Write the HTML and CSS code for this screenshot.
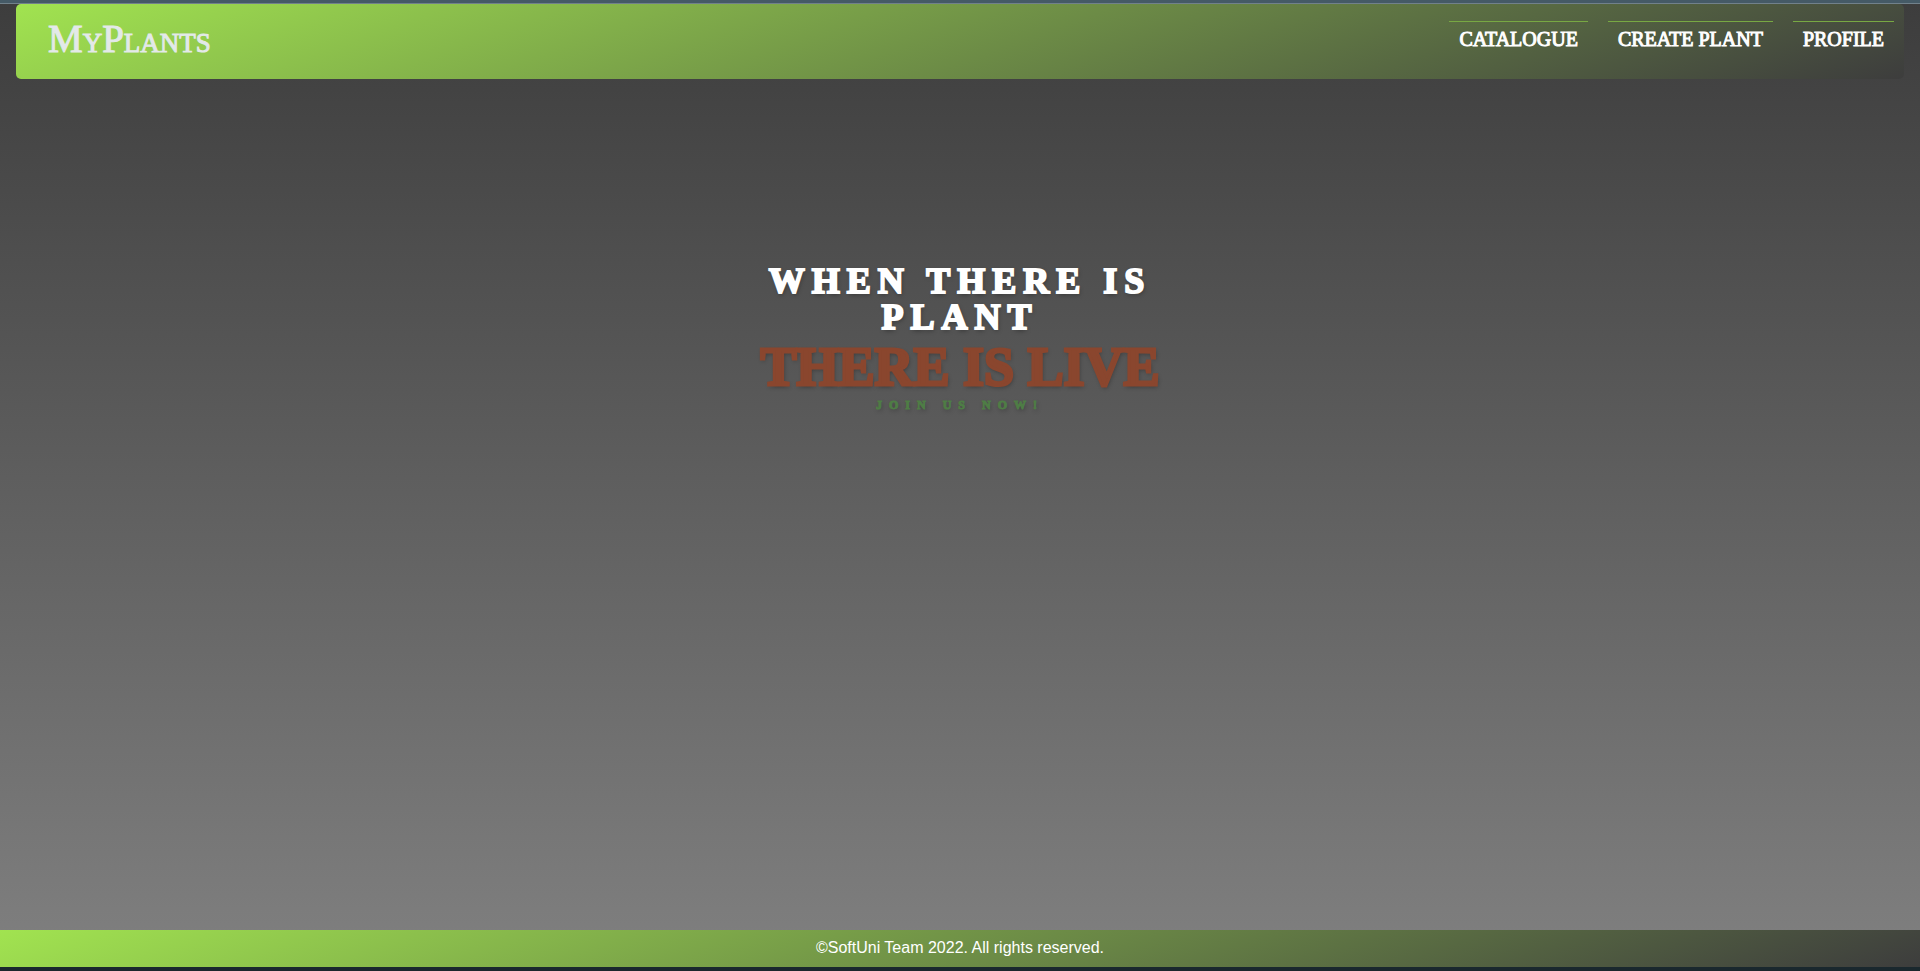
FILE: index.html
```html
<!DOCTYPE html>
<html lang="en">
<head>
<meta charset="utf-8">
<title>MyPlants</title>
<link rel="stylesheet" href="styles.css">
</head>
<body>
<div class="page">
  <header class="site-header">
    <a class="logo" href="#">MyPlants</a>
    <nav class="nav">
      <a class="nav-link" href="#">Catalogue</a>
      <a class="nav-link" href="#">Create Plant</a>
      <a class="nav-link" href="#">Profile</a>
    </nav>
  </header>
  <main class="hero">
    <h1 class="hero-title">
      <span class="hero-top">When there is plant</span>
      <span class="hero-main">there is live</span>
      <span class="hero-join">Join us now!</span>
    </h1>
  </main>
  <footer class="site-footer">
    <p class="copyright">©SoftUni Team 2022. All rights reserved.</p>
  </footer>
</div>
</body>
</html>
```
FILE: styles.css
```css
* {
  box-sizing: border-box;
}

body {
  margin: 0;
  background: #1a282e;
  font-family: "Liberation Sans", Arial, sans-serif;
}

.page {
  display: flex;
  flex-direction: column;
  min-height: calc(100vh - 4px);
  border-top: 3px solid #455a66;
  background: linear-gradient(#3d3d3d, #808080);
  box-shadow: inset 0 1px #71818b;
}

.site-header {
  display: flex;
  justify-content: space-between;
  align-items: flex-start;
  min-height: 75px;
  margin: 1px 16px 0;
  padding: 17px 10px 0 32px;
  border-radius: 5px;
  background: linear-gradient(160deg, #a1e350, #3d3d3d);
}

.logo {
  color: #e3e9e9;
  font-family: "Liberation Serif", "Times New Roman", serif;
  font-size: 39px;
  line-height: 36px;
  font-variant: small-caps;
  text-decoration: none;
  -webkit-text-stroke: 1px #e3e9e9;
}

.nav {
  display: flex;
  gap: 20px;
}

.nav-link {
  padding: 5px 10px;
  border-top: 1px solid #78a843;
  color: #fff;
  font-family: "Liberation Serif", "Times New Roman", serif;
  font-size: 20px;
  line-height: 24px;
  text-transform: uppercase;
  text-decoration: none;
  -webkit-text-stroke: 1px #fff;
}

.hero {
  flex: 1;
  padding-top: 184px;
}

.hero-title {
  width: 420px;
  max-width: 100%;
  margin: 0 auto;
  font-family: "Liberation Serif", "Times New Roman", serif;
  font-weight: 700;
  text-align: center;
  text-transform: uppercase;
  text-shadow: 1px 2px 4px rgba(0, 0, 0, 0.35);
}

.hero-title span {
  display: block;
}

.hero-top {
  color: #fff;
  font-size: 36px;
  line-height: 36px;
  letter-spacing: 7px;
  -webkit-text-stroke: 2px #fff;
}

.hero-main {
  color: #8a462e;
  font-size: 54px;
  line-height: 64px;
  -webkit-text-stroke: 3px #8a462e;
}

.hero-join {
  color: #4e7d45;
  font-size: 12px;
  line-height: 12px;
  letter-spacing: 7px;
  -webkit-text-stroke: 1px #4e7d45;
}

.site-footer {
  background: linear-gradient(160deg, #a1e350, #3d3d3d);
}

.copyright {
  margin: 0;
  padding: 9px 16px 10px;
  color: #fff;
  font-size: 16px;
  line-height: 18px;
  text-align: center;
}
```
